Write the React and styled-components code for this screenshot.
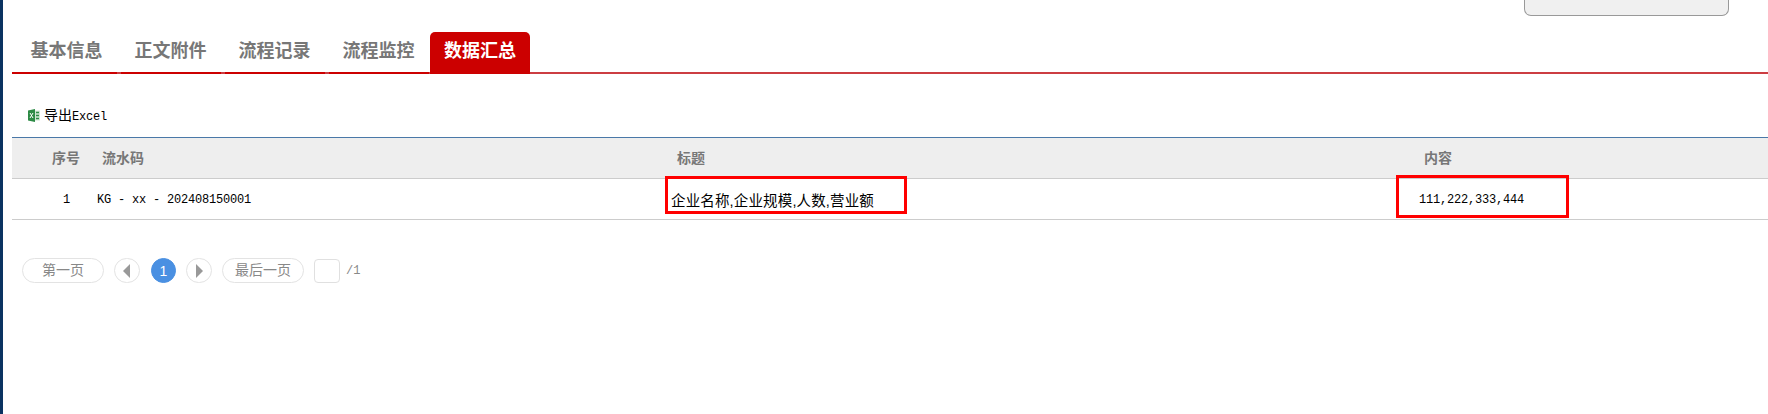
import React from "react";
import styled, { createGlobalStyle } from "styled-components";

const CJK = `"Liberation Mono", "Noto Sans CJK SC", monospace`;

const GlobalStyle = createGlobalStyle`
  html, body {
    margin: 0;
    padding: 0;
    background: #fff;
    font-family: ${CJK};
  }
`;

const Page = styled.div`
  width: 1768px;
  height: 414px;
  box-sizing: border-box;
  overflow: hidden;
  border-left: 3px solid #0b3361;
  padding-left: 9px;
`;

const TopBar = styled.div`
  display: flex;
  justify-content: flex-end;
  padding-right: 39px;
  height: 16px;
`;

const TopButton = styled.div`
  width: 205px;
  height: 16px;
  box-sizing: border-box;
  background: #f0f0f0;
  border: 1px solid #999;
  border-top: 0;
  border-radius: 0 0 7px 7px;
`;

const TabBar = styled.div`
  display: flex;
  gap: 4px;
  margin-top: 16px;
  padding-left: 4.5px;
  height: 40px;
  border-bottom: 2px solid #cc3d42;
`;

const Tab = styled.div`
  width: 100px;
  height: 42px;
  box-sizing: border-box;
  padding-top: 2px;
  text-align: center;
  line-height: 36px;
  font-size: 18px;
  font-weight: 700;
  color: ${(p) => (p.$active ? "#fff" : "#777")};
  background: ${(p) => (p.$active ? "#cc0000" : "transparent")};
  border-bottom: 2px solid #cc0000;
  border-radius: ${(p) => (p.$active ? "5px 5px 0 0" : "0")};
  margin-left: ${(p) => (p.$active ? "-2.5px" : "0")};

  &:first-child {
    width: 104.5px;
    margin-left: -4.5px;
    padding-left: 4.5px;
  }
`;

const Toolbar = styled.div`
  display: flex;
  align-items: center;
  gap: 4px;
  height: 20px;
  margin-top: 31px;
  padding-left: 16px;
  font-size: 14px;
  color: #000;
`;

const ToolbarLabel = styled.span`
  position: relative;
  top: -1px;
`;

const ExcelWord = styled.span`
  font-size: 12px;
  letter-spacing: -0.2px;
`;

const Table = styled.div`
  margin-top: 12px;
  border-top: 1px solid #4a78a8;
`;

const Row = styled.div`
  display: grid;
  grid-template-columns: 75px 575px 747px 1fr;
  box-sizing: border-box;
  height: 41px;
  align-items: center;
  background: ${(p) => (p.$head ? "#eeeeee" : "#fff")};
  border-bottom: 1px solid #ccc;
`;

const HeadCell = styled.div`
  font-size: 14px;
  font-weight: 700;
  color: #777;
  padding-bottom: 2px;
  padding-left: ${(p) => (p.$index ? "40px" : "15px")};
`;

const Cell = styled.div`
  position: relative;
  padding-top: 1px;
  font-size: 12px;
  letter-spacing: -0.2px;
  color: #000;
  padding-left: ${(p) => (p.$index ? "51px" : "10px")};
`;

const TitleCell = styled(Cell)`
  font-family: "Liberation Sans", "Noto Sans CJK SC", sans-serif;
  font-size: 14.5px;
  letter-spacing: 0.15px;
  padding-left: 9px;
`;

const Highlight = styled.div`
  position: absolute;
  box-sizing: border-box;
  border: 3px solid #ff0000;
  left: ${(p) => p.$left}px;
  top: ${(p) => p.$top}px;
  width: ${(p) => p.$w}px;
  height: ${(p) => p.$h}px;
`;

const Pager = styled.div`
  display: flex;
  align-items: center;
  gap: 10px;
  margin-top: 38px;
  padding-left: 10px;
  height: 25px;
  font-size: 14px;
  color: #888;
`;

const PageButton = styled.div`
  width: 82px;
  height: 25px;
  box-sizing: border-box;
  padding-bottom: 3px;
  display: flex;
  align-items: center;
  justify-content: center;
  border: 1px solid #e3e3e3;
  border-radius: 13px;
`;

const ArrowButton = styled(PageButton)`
  width: 26px;
  padding-bottom: 0;
`;

const CurrentPage = styled(PageButton)`
  width: 25px;
  margin-left: 1px;
  padding-bottom: 0;
  background: #4a90e2;
  border-color: #4a90e2;
  color: #fff;
  font-family: "Liberation Sans", sans-serif;
  font-size: 14px;
`;

const PageInput = styled.div`
  width: 26px;
  height: 24px;
  box-sizing: border-box;
  border: 1px solid #e0e0e0;
  border-radius: 4px;
`;

const PageTotal = styled.span`
  font-size: 12px;
  margin-left: -4px;
`;

const ExcelIcon = () => (
  <svg width="12" height="13" viewBox="0 0 12 13">
    <rect x="5" y="1.5" width="7" height="10" fill="#cfe6d4" />
    <path d="M0 1.5 L7 0 V13 L0 11.5 Z" fill="#2c8a45" />
    <path d="M2 4 L5 9 M5 4 L2 9" stroke="#fff" strokeWidth="1" />
    <path d="M8 3.5 H11 M8 6.5 H11 M8 9.5 H11" stroke="#2c8a45" strokeWidth="1.4" />
  </svg>
);

const Arrow = ({ dir }) => (
  <svg width="8" height="14" viewBox="0 0 8 14">
    <path d={dir === "left" ? "M7 0 V14 L0 7 Z" : "M1 0 V14 L8 7 Z"} fill="#999" />
  </svg>
);

const tabs = ["基本信息", "正文附件", "流程记录", "流程监控", "数据汇总"];

export default function App() {
  return (
    <>
      <GlobalStyle />
      <Page>
        <TopBar>
          <TopButton />
        </TopBar>
        <TabBar>
          {tabs.map((t, i) => (
            <Tab key={t} $active={i === 4}>
              {t}
            </Tab>
          ))}
        </TabBar>
        <Toolbar>
          <ExcelIcon />
          <ToolbarLabel>
            导出<ExcelWord>Excel</ExcelWord>
          </ToolbarLabel>
        </Toolbar>
        <Table>
          <Row $head>
            <HeadCell $index>序号</HeadCell>
            <HeadCell>流水码</HeadCell>
            <HeadCell>标题</HeadCell>
            <HeadCell>内容</HeadCell>
          </Row>
          <Row>
            <Cell $index>1</Cell>
            <Cell>KG - xx - 202408150001</Cell>
            <TitleCell>
              企业名称,企业规模,人数,营业额
              <Highlight $left={3} $top={-12} $w={242} $h={38} />
            </TitleCell>
            <Cell>
              111,222,333,444
              <Highlight $left={-13} $top={-17} $w={173} $h={43} />
            </Cell>
          </Row>
        </Table>
        <Pager>
          <PageButton>第一页</PageButton>
          <ArrowButton>
            <Arrow dir="left" />
          </ArrowButton>
          <CurrentPage>1</CurrentPage>
          <ArrowButton>
            <Arrow dir="right" />
          </ArrowButton>
          <PageButton>最后一页</PageButton>
          <PageInput />
          <PageTotal>/1</PageTotal>
        </Pager>
      </Page>
    </>
  );
}
